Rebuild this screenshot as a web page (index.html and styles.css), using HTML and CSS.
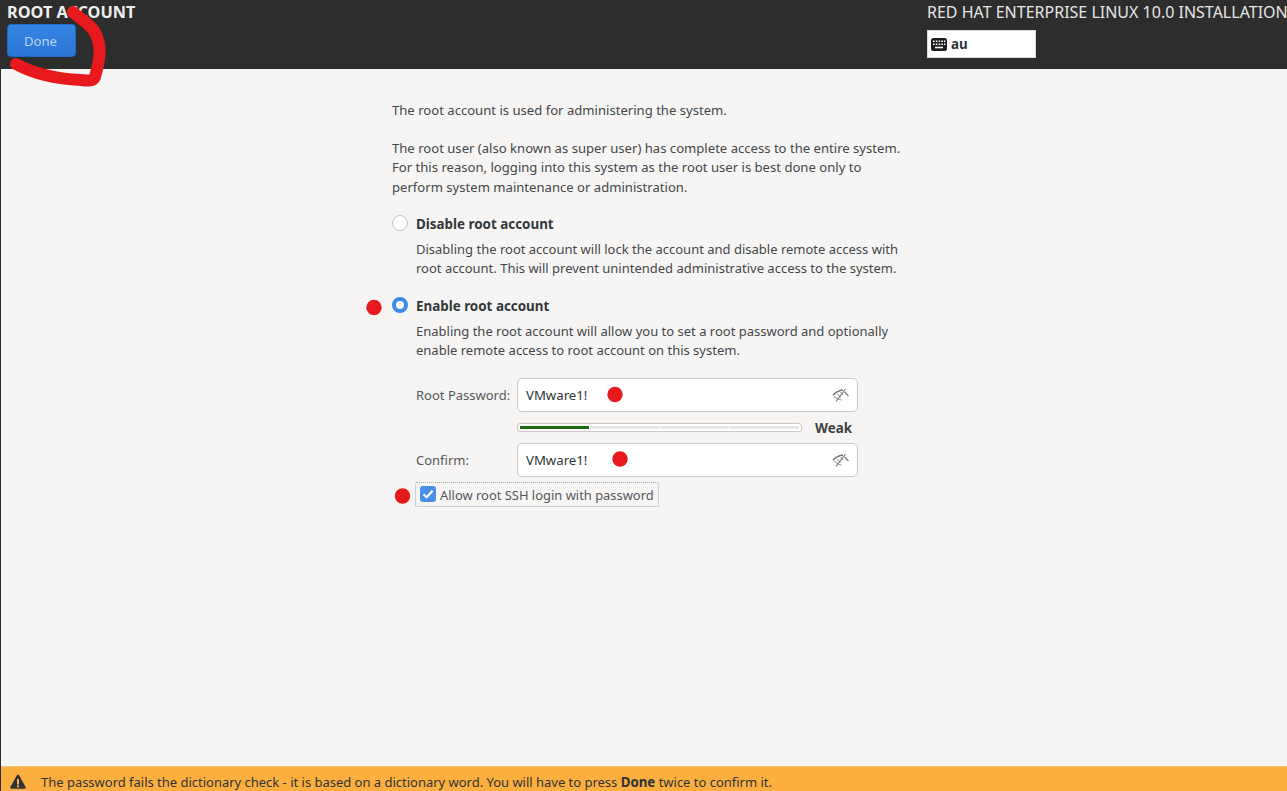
FILE: index.html
```html
<!DOCTYPE html>
<html lang="en">
<head>
<meta charset="utf-8">
<title>Root Account</title>
<link rel="stylesheet" href="styles.css">
</head>
<body>
<div class="app">
  <header class="topbar">
    <div class="topbar-left">
      <h1 class="page-title">ROOT ACCOUNT</h1>
      <button class="done-btn" type="button">Done</button>
    </div>
    <div class="topbar-right">
      <div class="product-title">RED HAT ENTERPRISE LINUX 10.0 INSTALLATION</div>
      <div class="layout-box">
        <svg class="kbd-icon" viewBox="0 0 16 13" width="16" height="13" aria-hidden="true">
          <rect x="0" y="0" width="16" height="13" rx="2.500" fill="#1c1c1c"/>
          <g fill="#fff">
            <rect x="2" y="2.500" width="1.600" height="1.500"/><rect x="4.800" y="2.500" width="1.600" height="1.500"/><rect x="7.600" y="2.500" width="1.600" height="1.500"/><rect x="10.400" y="2.500" width="1.600" height="1.500"/><rect x="13" y="2.500" width="1.400" height="1.500"/>
            <rect x="2" y="5.500" width="1.600" height="1.500"/><rect x="4.800" y="5.500" width="1.600" height="1.500"/><rect x="7.600" y="5.500" width="1.600" height="1.500"/><rect x="10.400" y="5.500" width="1.600" height="1.500"/><rect x="13" y="5.500" width="1.400" height="1.500"/>
            <rect x="4" y="8.700" width="8" height="1.600"/>
          </g>
        </svg>
        <span class="layout-text">au</span>
      </div>
    </div>
  </header>

  <main class="content">
    <div class="column">
      <p class="para intro">The root account is used for administering the system.</p>
      <p class="para">The root user (also known as super user) has complete access to the entire system.<br>For this reason, logging into this system as the root user is best done only to<br>perform system maintenance or administration.</p>

      <div class="radio-row disable-row">
        <span class="radio"></span>
        <span class="radio-label">Disable root account</span>
      </div>
      <p class="para desc">Disabling the root account will lock the account and disable remote access with<br>root account. This will prevent unintended administrative access to the system.</p>

      <div class="radio-row enable-row">
        <span class="radio radio-on"></span>
        <span class="radio-label">Enable root account</span>
      </div>
      <p class="para desc">Enabling the root account will allow you to set a root password and optionally<br>enable remote access to root account on this system.</p>

      <div class="form-grid">
        <label class="field-label">Root Password:</label>
        <div class="entry">
          <span class="entry-text">VMware1!</span>
          <svg class="eye" viewBox="0 0 18 16" width="18" height="16" aria-hidden="true">
            <path d="M1 8 C3.500 5.500 7 3.500 11 3" fill="none" stroke="#77767b" stroke-width="1.700"/>
            <path d="M1.500 9 C4 11 6.500 12.500 9.500 13 M5.500 7 L8.500 10.500 M8.500 5 L11 8" fill="none" stroke="#8f8e92" stroke-width="1"/>
            <path d="M4 14.500 L13.500 2 M12.500 5 L16.500 9" fill="none" stroke="#77767b" stroke-width="1.100"/>
          </svg>
        </div>
        <div class="meter-row">
          <div class="meter">
            <span class="seg seg-on"></span><span class="seg"></span><span class="seg"></span><span class="seg"></span>
          </div>
          <span class="meter-text">Weak</span>
        </div>
        <label class="field-label">Confirm:</label>
        <div class="entry">
          <span class="entry-text">VMware1!</span>
          <svg class="eye" viewBox="0 0 18 16" width="18" height="16" aria-hidden="true">
            <path d="M1 8 C3.500 5.500 7 3.500 11 3" fill="none" stroke="#77767b" stroke-width="1.700"/>
            <path d="M1.500 9 C4 11 6.500 12.500 9.500 13 M5.500 7 L8.500 10.500 M8.500 5 L11 8" fill="none" stroke="#8f8e92" stroke-width="1"/>
            <path d="M4 14.500 L13.500 2 M12.500 5 L16.500 9" fill="none" stroke="#77767b" stroke-width="1.100"/>
          </svg>
        </div>
      </div>

      <div class="check-row">
        <span class="check">
          <svg viewBox="0 0 16 16" width="16" height="16" aria-hidden="true"><path d="M3.500 8.200 L6.600 11.200 L12.600 4.800" fill="none" stroke="#fff" stroke-width="2.200"/></svg>
        </span>
        <span class="check-label">Allow root SSH login with password</span>
      </div>
    </div>
  </main>

  <footer class="warning">
    <svg class="warn-icon" viewBox="0 0 16 15" width="16" height="15" aria-hidden="true">
      <path d="M8 0.500 C8.500 0.500 8.900 0.800 9.100 1.200 L15.600 13 C16 13.800 15.500 14.700 14.600 14.700 L1.400 14.700 C0.500 14.700 0 13.800 0.400 13 L6.900 1.200 C7.100 0.800 7.500 0.500 8 0.500 Z" fill="#2e3436"/>
      <rect x="7" y="5" width="2" height="5.500" fill="#fcaf3e"/><rect x="7" y="11.400" width="2" height="2" fill="#fcaf3e"/>
    </svg>
    <span>The password fails the dictionary check - it is based on a dictionary word. You will have to press <b class="warn-strong">Done</b> twice to confirm it.</span>
  </footer>

  <svg class="scribble" viewBox="0 0 1287 791" width="1287" height="791" aria-hidden="true">
    <path d="M73 12 C81 20 93 25 97 37 C102 50 99 62 95 77 C93 81 89 81 81 80 C60 79 36 75 16 64" fill="none" stroke="#e8191c" stroke-width="12" stroke-linecap="round" stroke-linejoin="round"/>
    <circle cx="374" cy="307.500" r="7.700" fill="#e8191c"/>
    <circle cx="615" cy="394.500" r="7.700" fill="#e8191c"/>
    <circle cx="620" cy="459" r="7.700" fill="#e8191c"/>
    <circle cx="402.500" cy="496" r="7.700" fill="#e8191c"/>
  </svg>
</div>
</body>
</html>
```
FILE: styles.css
```css
* { box-sizing: border-box; }
html, body { margin: 0; padding: 0; height: 100%; overflow: hidden; }
body { font-family: "Noto Sans", sans-serif; font-size: 13.100px; color: #2e3436; background: #f6f5f4; }
.app { position: relative; display: flex; flex-direction: column; height: 791px; border-left: 1px solid #2d2d2d; overflow: hidden; }

.topbar { height: 69px; flex: none; background: #2d2d2d; display: flex; justify-content: space-between; padding-left: 6px; color: #fff; }
.topbar-left { display: flex; flex-direction: column; align-items: flex-start; padding-top: 2px; }
.page-title { margin: 0; font-size: 16.250px; line-height: 21px; font-weight: 700; color: #eeeeec; }
.done-btn { margin-top: 1px; width: 69px; height: 33px; border: 1px solid #1b6acb; border-radius: 4px; background: linear-gradient(#3584e4, #2a76d6); color: #bcd3f2; font: 13.100px "Noto Sans", sans-serif; padding: 0 2px 0 0; }
.topbar-right { width: 360px; flex: none; display: flex; flex-direction: column; align-items: flex-start; padding-top: 1px; overflow: hidden; }
.product-title { font-size: 16px; line-height: 22px; white-space: nowrap; color: #e6e6e6; }
.layout-box { margin-top: 7px; width: 109px; height: 28px; background: #fff; border: 1px solid #d8d8d8; display: flex; align-items: center; gap: 4px; padding-left: 3px; color: #2e3436; }
.layout-text { font-weight: 700; font-size: 13.330px; }
.kbd-icon { flex: none; }

.content { flex: 1; padding-left: 391px; }
.column { width: 530px; }
.para { margin: 0; line-height: 19.500px; color: #44474a; }
.intro { margin-top: 32px; margin-bottom: 18px; }
.radio-row { display: flex; align-items: center; gap: 8px; height: 20px; }
.disable-row { margin-top: 16px; }
.enable-row { margin-top: 17px; }
.radio { width: 16px; height: 16px; border-radius: 50%; background: #fff; border: 1px solid #c9c3bd; flex: none; }
.radio-on { background: #fff; border: 4px solid #3f8ae8; }
.radio-label { font-weight: 700; font-size: 13.400px; margin-top: 1px; color: #33373a; }
.desc { margin-left: 24px; margin-top: 7px; font-size: 13px; line-height: 19px; }

.form-grid { display: grid; grid-template-columns: 101px 341px; grid-template-rows: 34px 19px 34px; row-gap: 6px; margin: 18px 0 0 24px; align-items: center; }
.field-label { color: #55585b; font-size: 13px; margin-top: -1px; }
.entry { height: 34px; background: #fff; border: 1px solid #cdc7c2; border-radius: 5px; display: flex; align-items: center; justify-content: space-between; padding: 0 7px 0 8px; color: #2e3436; }
.entry-text { font-size: 13.200px; margin-top: -1px; }
.eye { flex: none; }
.meter-row { grid-column: 2; display: flex; align-items: center; justify-content: space-between; padding-right: 6px; }
.meter { width: 285px; height: 9px; border: 1px solid #cdc7c2; border-radius: 3px; background: #fff; display: flex; gap: 1px; padding: 2px; }
.seg { flex: 1; background: #e4e7e9; }
.seg-on { background: #1a6b12; }
.meter-text { font-weight: 700; font-size: 13.400px; color: #3d3f42; }

.check-row { margin: 5px 0 0 23px; width: 244px; height: 25px; display: flex; align-items: center; gap: 4px; padding-left: 4px; border: 1px dotted #a8a8a8; border-radius: 2px; white-space: nowrap; font-size: 12.930px; }
.check { width: 16px; height: 16px; border-radius: 3px; background: #4a8fe7; display: block; flex: none; margin-bottom: 1px; }
.check svg { display: block; }
.check-label { color: #55585b; }

.warning { flex: none; height: 25px; background: #fcaf3e; border-top: 1px solid #f4c078; display: flex; align-items: center; padding: 5px 0 0 9px; gap: 15px; color: #2e3436; white-space: nowrap; font-size: 12.970px; }
.warn-icon { flex: none; }
.warn-strong { font-size: 13.300px; }

.scribble { position: absolute; left: -1px; top: 0; pointer-events: none; }
```
